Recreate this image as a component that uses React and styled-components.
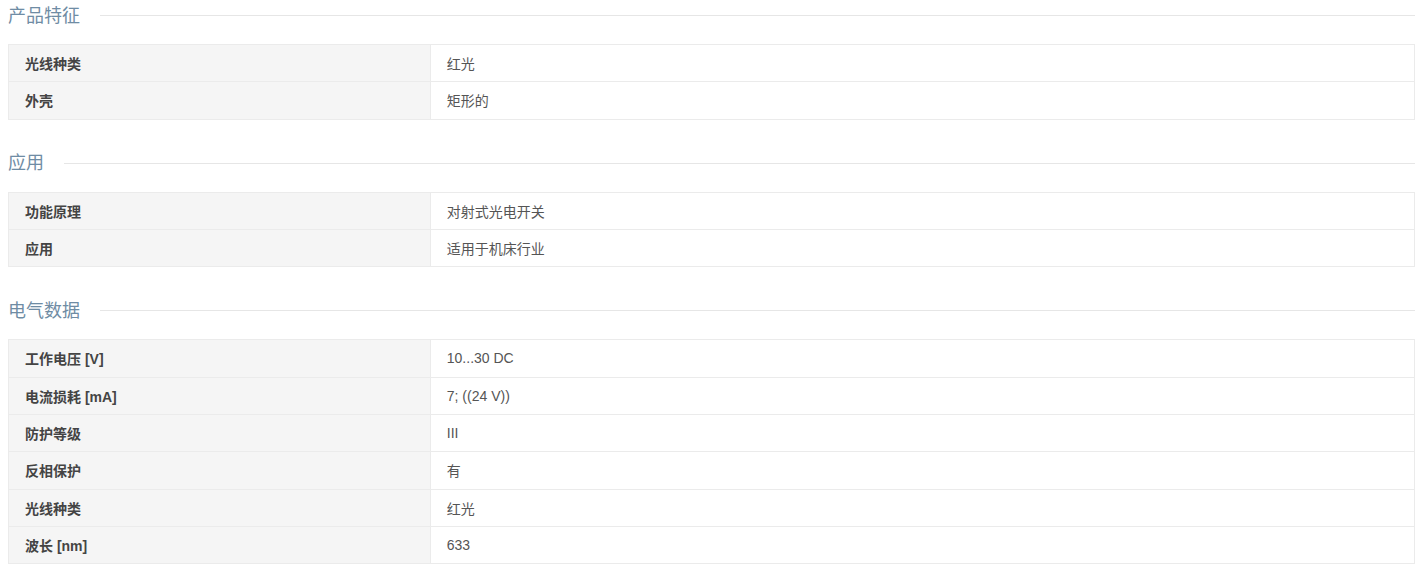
import React from "react";
import styled, { createGlobalStyle } from "styled-components";

const Global = createGlobalStyle`
  html, body { margin: 0; padding: 0; background: #fff; }
  body {
    padding: 0 8px 8px;
    font-family: "Liberation Sans", Arial, "Noto Sans CJK SC", sans-serif;
  }
`;

const Section = styled.section`
  & + & { margin-top: 28px; }
`;

const Heading = styled.div`
  display: flex;
  align-items: center;
  gap: 20px;
  height: 31px;
  margin-bottom: 13px;
`;

const HeadingText = styled.h3`
  margin: 0;
  font-size: 18px;
  font-weight: normal;
  line-height: 1;
  color: #6f8ca4;
  white-space: nowrap;
  font-family: "Liberation Sans", "Noto Sans CJK SC", sans-serif;
`;

const Rule = styled.div`
  flex: 1;
  height: 1px;
  background: #e6e6e6;
`;

const Table = styled.table`
  width: 100%;
  border-collapse: collapse;
  table-layout: fixed;
  border: 1px solid #ebebeb;
`;

const Row = styled.tr`
  height: 37.333px;
`;

const Label = styled.th`
  box-sizing: border-box;
  width: 30%;
  padding: 0 16px;
  text-align: left;
  background: #f5f5f5;
  border: 1px solid #ebebeb;
  font-size: 14px;
  font-weight: bold;
  color: #444;
`;

const Value = styled.td`
  padding: 0 16px;
  border: 1px solid #ebebeb;
  font-size: 14px;
  color: #555;
`;

const data = [
  {
    title: "产品特征",
    rows: [
      ["光线种类", "红光"],
      ["外壳", "矩形的"],
    ],
  },
  {
    title: "应用",
    rows: [
      ["功能原理", "对射式光电开关"],
      ["应用", "适用于机床行业"],
    ],
  },
  {
    title: "电气数据",
    rows: [
      ["工作电压 [V]", "10...30 DC"],
      ["电流损耗 [mA]", "7; ((24 V))"],
      ["防护等级", "III"],
      ["反相保护", "有"],
      ["光线种类", "红光"],
      ["波长 [nm]", "633"],
    ],
  },
];

export default function App() {
  return (
    <>
      <Global />
      {data.map(sec => (
        <Section key={sec.title}>
          <Heading>
            <HeadingText>{sec.title}</HeadingText>
            <Rule />
          </Heading>
          <Table>
            <tbody>
              {sec.rows.map(([k, v], i) => (
                <Row key={i}>
                  <Label>{k}</Label>
                  <Value>{v}</Value>
                </Row>
              ))}
            </tbody>
          </Table>
        </Section>
      ))}
    </>
  );
}
